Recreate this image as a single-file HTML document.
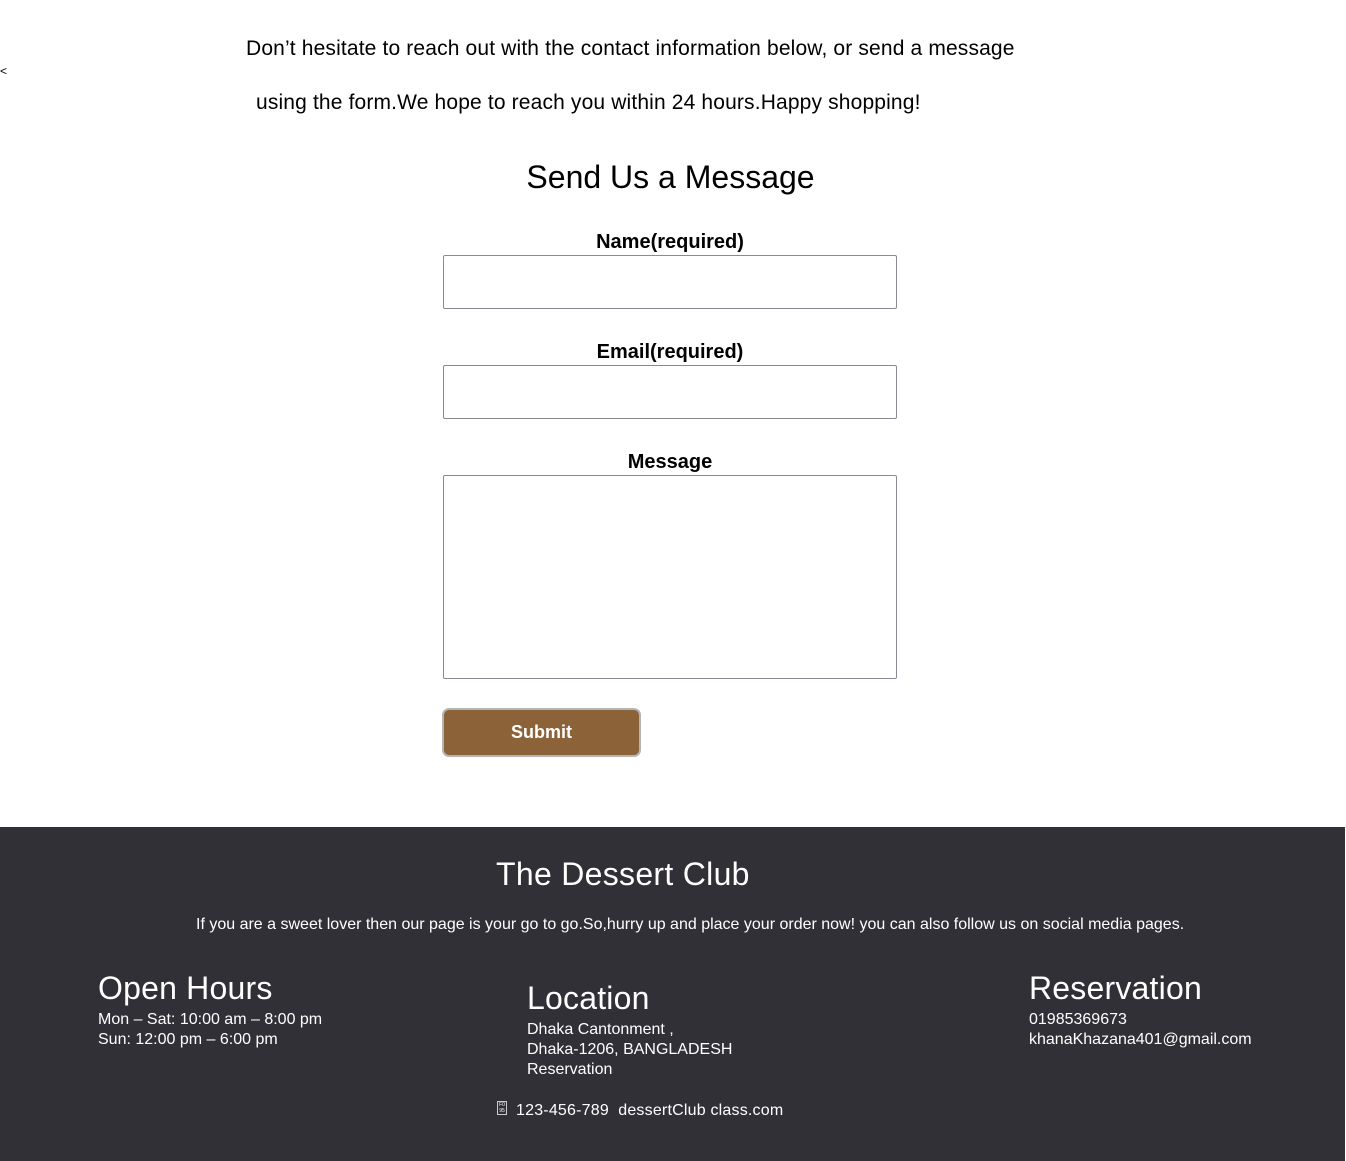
<!DOCTYPE html>
<html><head><meta charset="utf-8"><style>
*{margin:0;padding:0;box-sizing:border-box}
body{width:1346px;height:1161px;background:#fff;font-family:"Liberation Sans",sans-serif;position:relative;overflow:hidden;color:#000}
.a{position:absolute;white-space:nowrap}
.inp{position:absolute;left:443px;width:454px;border:1px solid #8a8a96;border-radius:2px;background:#fff}
.lbl{position:absolute;left:443px;width:454px;text-align:center;font-size:20px;font-weight:bold;}
.foot{position:absolute;left:0;top:827px;width:1345px;height:334px;background:#303036;color:#fff}
.foot .a{color:#fff}
</style></head><body>
<div class="a" style="left:0;top:64px;font-size:12px">&lt;</div>
<div class="a" style="left:246px;top:37px;font-size:21px;letter-spacing:0.15px">Don’t hesitate to reach out with the contact information below, or send a message</div>
<div class="a" style="left:256px;top:91px;font-size:21px;letter-spacing:0.15px">using the form.We hope to reach you within 24 hours.Happy shopping!</div>
<div class="a" style="left:0;width:1341px;text-align:center;top:159px;font-size:32px">Send Us a Message</div>
<div class="lbl" style="top:231px">Name(required)</div>
<div class="inp" style="top:255px;height:54px"></div>
<div class="lbl" style="top:341px">Email(required)</div>
<div class="inp" style="top:365px;height:54px"></div>
<div class="lbl" style="top:451px">Message</div>
<div class="inp" style="top:475px;height:204px"></div>
<div class="a" style="left:442px;top:708px;width:199px;height:49px;background:#8c6239;border:2px solid #b5b5b5;border-radius:7px;color:#fff;font-weight:bold;font-size:18px;text-align:center;line-height:45px">Submit</div>
<div class="foot">
<div class="a" style="left:496px;top:29px;font-size:32px;letter-spacing:0.3px">The Dessert Club</div>
<div class="a" style="left:196px;top:89px;font-size:16px">If you are a sweet lover then our page is your go to go.So,hurry up and place your order now! you can also follow us on social media pages.</div>
<div class="a" style="left:98px;top:143px;font-size:32px;letter-spacing:0.2px">Open Hours</div>
<div class="a" style="left:98px;top:183px;font-size:16px;line-height:20px">Mon – Sat: 10:00 am – 8:00 pm<br>Sun: 12:00 pm – 6:00 pm</div>
<div class="a" style="left:527px;top:153px;font-size:32px;letter-spacing:0.2px">Location</div>
<div class="a" style="left:527px;top:193px;font-size:16px;line-height:20px">Dhaka Cantonment ,<br>Dhaka-1206, BANGLADESH<br>Reservation</div>
<div class="a" style="left:1029px;top:143px;font-size:32px;letter-spacing:0.2px">Reservation</div>
<div class="a" style="left:1029px;top:183px;font-size:16px;line-height:20px">01985369673<br>khanaKhazana401@gmail.com</div>
<div class="a" style="left:497px;top:274px;width:10px;height:14px;border:1px solid #ccc;font-size:5px;line-height:6px;text-align:center">F0<br>95</div>
<div class="a" style="left:516px;top:275px;font-size:16px;letter-spacing:0.2px">123-456-789&nbsp; dessertClub class.com</div>
</div>
</body></html>
